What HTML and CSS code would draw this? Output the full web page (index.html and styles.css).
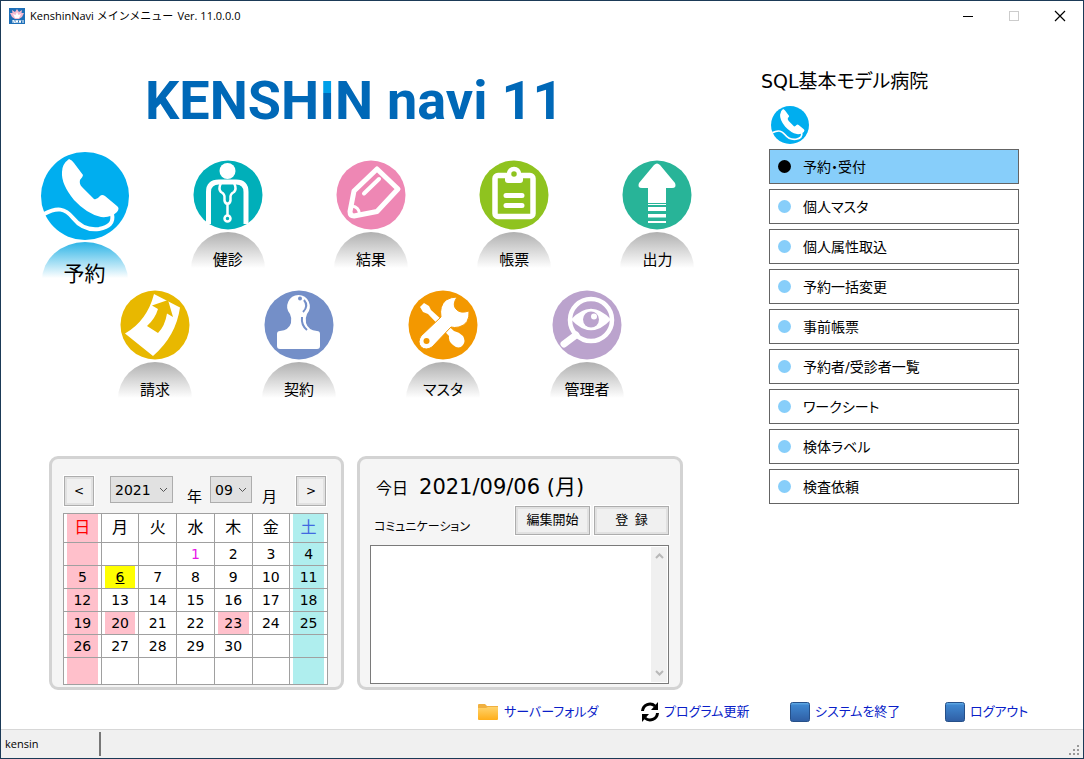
FILE: index.html
```html
<!DOCTYPE html>
<html lang="ja">
<head>
<meta charset="utf-8">
<title>KenshinNavi メインメニュー</title>
<link rel="stylesheet" href="styles.css">
</head>
<body>
<svg class="defs" width="0" height="0" aria-hidden="true">
  <symbol id="phone" viewBox="0 0 88 88">
    <circle cx="44" cy="44" r="44" fill="#00aeef"/>
    <path fill="#fff" d="M28 7Q31 8 33 11L42 23Q42 25 39 28Q38 32 41 35L53 47Q56 48 59 44Q61 42 64 44L76 54Q79 56 76 60Q70 66 60 65Q46 62 33 48Q20 32 21 20Q21 12 28 7Z"/>
    <path fill="none" stroke="#fff" stroke-width="4" d="M3 62C16 55 24 56 32 66C40 76 50 78 58 77C68 75 73 71 71 62"/>
  </symbol>
</svg>
<div class="window">
  <header class="titlebar">
    <svg class="app-icon" viewBox="0 0 16 16" aria-hidden="true">
      <rect width="16" height="16" fill="#1d6fb8"/>
      <path fill="#f3b9cf" d="M8 1l2 3 3-2-.5 3L15 5l-2 4-3 2H6L3 9 1 5l2.500 0L3 2l3 2z"/>
      <path fill="#fff" d="M8 4l1.500 3L12 6l-2 4H6L4 6l2.500 1z"/>
      <path stroke="#fff" fill="none" d="M4 15v-3l2 3v-3M7 15l1-3 1 3M10 12l1 3 1-3M14 12v3"/>
    </svg>
    <h1 class="title">KenshinNavi メインメニュー</h1>
    <span class="version">Ver. 11.0.0.0</span>
    <div class="controls">
      <button class="control" aria-label="最小化"><svg width="12" height="12" viewBox="0 0 12 12"><path d="M1 6.500h10" stroke="#000"/></svg></button>
      <button class="control" aria-label="最大化" disabled><svg width="12" height="12" viewBox="0 0 12 12"><rect x="1.500" y="1.500" width="9" height="9" fill="none" stroke="#ccc"/></svg></button>
      <button class="control" aria-label="閉じる"><svg width="12" height="12" viewBox="0 0 12 12"><path d="M1 1l10 10M11 1L1 11" stroke="#000" stroke-width="1.200"/></svg></button>
    </div>
  </header>

  <main class="main">
    <section class="left">
      <div class="logo"><span>KENSH<span class="logo-i">I</span>N</span> <span>navi</span> <span>11</span></div>

      <nav class="launch launch-top">
        <button class="app app-big">
          <svg class="app-art" aria-hidden="true"><use href="#phone"/></svg>
          <span class="app-label">予約</span>
        </button>
        <button class="app">
          <svg class="app-art" viewBox="0 0 70 70" aria-hidden="true">
            <circle cx="35" cy="35" r="34.500" fill="#00afb9"/>
            <circle cx="34.500" cy="11" r="8" fill="#fff"/>
            <g fill="none" stroke="#fff">
              <path stroke-width="5" d="M15.500 64V32Q15.500 22 26 22H43Q53 22 53 32V64"/>
              <path stroke-width="2.500" d="M28 23Q25 29 28 32Q32 34 31.500 38Q31 43 34.500 44Q38 43 37.500 38Q37 34 41 32Q44 29 41 23M34.500 44V55"/>
              <circle cx="34.500" cy="58.500" r="3" stroke-width="2.500"/>
            </g>
          </svg>
          <span class="app-label">健診</span>
        </button>
        <button class="app">
          <svg class="app-art" viewBox="0 0 70 70" aria-hidden="true">
            <circle cx="35" cy="35" r="34.500" fill="#ee87b4"/>
            <g fill="none" stroke="#fff" stroke-linejoin="round" stroke-linecap="round">
              <path stroke-width="5" d="M41 9L62 29L41 51.500L18 56Q14 56 14 51.500L18 31Z"/>
              <path stroke-width="4" d="M43 19L28 33.500"/>
              <path stroke-width="3" d="M16 46Q23 47 23.500 54"/>
            </g>
          </svg>
          <span class="app-label">結果</span>
        </button>
        <button class="app">
          <svg class="app-art" viewBox="0 0 70 70" aria-hidden="true">
            <circle cx="35" cy="35" r="34.500" fill="#8fc31f"/>
            <rect x="16" y="15.500" width="38" height="41" rx="3" fill="none" stroke="#fff" stroke-width="5.500"/>
            <path fill="#fff" d="M26 14H44V20Q44 23 41 23H29Q26 23 26 20Z"/>
            <circle cx="35" cy="14" r="5" fill="#8fc31f" stroke="#fff" stroke-width="4.500"/>
            <path stroke="#fff" stroke-width="5" stroke-linecap="round" d="M27 35.500H43M27 45.500H43"/>
          </svg>
          <span class="app-label">帳票</span>
        </button>
        <button class="app">
          <svg class="app-art" viewBox="0 0 70 70" aria-hidden="true">
            <circle cx="35" cy="35" r="34.500" fill="#28b498"/>
            <path fill="#fff" d="M32 5Q35 2 38 5L53 23Q55 28 50 28H44V43H26V28H20Q15 28 17 23Z"/>
            <path fill="#fff" d="M26 44H44V45H26ZM26 47H44V51H26ZM26 54H44V57.500H26ZM26 61H44V63H26Z"/>
          </svg>
          <span class="app-label">出力</span>
        </button>
      </nav>

      <nav class="launch launch-bottom">
        <button class="app">
          <svg class="app-art" viewBox="0 0 70 70" aria-hidden="true">
            <circle cx="35" cy="35" r="34.500" fill="#e8b800"/>
            <path fill="#fff" d="M34 4L60 17.500Q56 46 33 66L5 43.500Q27 31 34 4Z"/>
            <path fill="#e8b800" d="M48 10L53 27L47 23.500Q45 36 38 43L27 36Q35 29 38 19L32 15.500Z"/>
          </svg>
          <span class="app-label">請求</span>
        </button>
        <button class="app">
          <svg class="app-art" viewBox="0 0 70 70" aria-hidden="true">
            <circle cx="35" cy="35" r="34.500" fill="#748fc8"/>
            <path fill="#fff" d="M34.500 5A11.500 11.500 0 0 1 43 24Q41 28 42 33Q44 40 53 41Q56 41 56 44V56Q56 59 53 59H16Q13 59 13 56V44Q13 41 16 41Q25 40 27 33Q28 28 26 24A11.500 11.500 0 0 1 34.500 5Z"/>
            <circle cx="36" cy="8.500" r="2" fill="#748fc8"/>
            <path fill="none" stroke="#748fc8" stroke-width="2" d="M40 10Q45 16 39 22M38 27Q37 35 43 40"/>
          </svg>
          <span class="app-label">契約</span>
        </button>
        <button class="app">
          <svg class="app-art" viewBox="0 0 70 70" aria-hidden="true">
            <circle cx="35" cy="35" r="34.500" fill="#f39800"/>
            <path fill="#fff" d="M12 17L16 13L21 16L23 20L46 41Q51 42 55 46Q58 51 55 55Q51 60 45 55Q40 51 41 46L20 24L15 22Z"/>
            <path fill="#fff" stroke="#f39800" d="M49 7Q44 15 48 19Q52 24 61 21Q62 34 51 37Q46 38 43 37L24 57Q18 61 13 57Q9 52 13 46L33 27Q31 16 38 10Q43 7 49 7Z"/>
            <circle cx="18.500" cy="51" r="3" fill="#f39800"/>
          </svg>
          <span class="app-label">マスタ</span>
        </button>
        <button class="app">
          <svg class="app-art" viewBox="0 0 70 70" aria-hidden="true">
            <circle cx="35" cy="35" r="34.500" fill="#bba3cd"/>
            <circle cx="39" cy="30" r="21" fill="none" stroke="#fff" stroke-width="4.500"/>
            <path stroke="#fff" stroke-width="7" stroke-linecap="round" d="M24 45L12 54"/>
            <path fill="#fff" d="M19 29.500Q39 8 59 29.500Q39 51 19 29.500Z"/>
            <circle cx="39" cy="29.500" r="8" fill="#bba3cd"/>
            <circle cx="42" cy="26.500" r="3" fill="#fff"/>
          </svg>
          <span class="app-label">管理者</span>
        </button>
      </nav>

      <div class="panels">
        <section class="panel calendar">
          <div class="month-bar">
            <button class="push step" aria-label="前の月">&lt;</button>
            <select class="pick pick-year" id="year" aria-label="年"><option>2021</option></select>
            <label class="unit unit-year" for="year">年</label>
            <select class="pick pick-month" id="month" aria-label="月"><option>09</option></select>
            <label class="unit unit-month" for="month">月</label>
            <button class="push step step-next" aria-label="次の月">&gt;</button>
          </div>
          <table class="days">
            <thead>
              <tr><th class="sun">日</th><th>月</th><th>火</th><th>水</th><th>木</th><th>金</th><th class="sat">土</th></tr>
            </thead>
            <tbody>
              <tr><td class="sun"></td><td></td><td></td><td class="first">1</td><td>2</td><td>3</td><td class="sat">4</td></tr>
              <tr><td class="sun">5</td><td class="today">6</td><td>7</td><td>8</td><td>9</td><td>10</td><td class="sat">11</td></tr>
              <tr><td class="sun">12</td><td>13</td><td>14</td><td>15</td><td>16</td><td>17</td><td class="sat">18</td></tr>
              <tr><td class="sun">19</td><td class="holiday">20</td><td>21</td><td>22</td><td class="holiday">23</td><td>24</td><td class="sat">25</td></tr>
              <tr><td class="sun">26</td><td>27</td><td>28</td><td>29</td><td>30</td><td></td><td class="sat"></td></tr>
              <tr class="last"><td class="sun"></td><td></td><td></td><td></td><td></td><td></td><td class="sat"></td></tr>
            </tbody>
          </table>
        </section>

        <section class="panel message">
          <p class="date"><span class="date-key">今日</span><span>2021/09/06 (月)</span></p>
          <div class="message-bar">
            <label class="message-label" for="memo">コミュニケーション</label>
            <button class="push">編集開始</button>
            <button class="push">登&ensp;録</button>
          </div>
          <div class="memo">
            <textarea class="memo-text" id="memo"></textarea>
            <div class="scroll" aria-hidden="true">
              <svg width="9" height="6" viewBox="0 0 9 6"><path d="M1 5l3.500-3.500L8 5" fill="none" stroke="#b8b8b8" stroke-width="2"/></svg>
              <svg width="9" height="6" viewBox="0 0 9 6"><path d="M1 1l3.500 3.500L8 1" fill="none" stroke="#b8b8b8" stroke-width="2"/></svg>
            </div>
          </div>
        </section>
      </div>
    </section>

    <aside class="side">
      <h2 class="hospital">SQL基本モデル病院</h2>
      <svg class="side-art" aria-hidden="true"><use href="#phone"/></svg>
      <nav class="menu">
        <button class="item item-on">予約・受付</button>
        <button class="item">個人マスタ</button>
        <button class="item">個人属性取込</button>
        <button class="item">予約一括変更</button>
        <button class="item">事前帳票</button>
        <button class="item">予約者/受診者一覧</button>
        <button class="item">ワークシート</button>
        <button class="item">検体ラベル</button>
        <button class="item">検査依頼</button>
      </nav>
    </aside>
  </main>

  <nav class="links">
    <a class="link" href="#folder">
      <svg width="21" height="22" viewBox="0 0 21 22" aria-hidden="true">
        <defs><linearGradient id="fold" x2="0" y2="1"><stop offset="0" stop-color="#ffd36b"/><stop offset="1" stop-color="#ffae1a"/></linearGradient></defs>
        <path fill="#f0b040" d="M0 4Q0 3 1 3H7L9 5H20V9H0Z"/><path fill="url(#fold)" d="M0 7H8L10 6H20V18Q20 19 19 19H1Q0 19 0 18Z"/>
      </svg>サーバーフォルダ</a>
    <a class="link" href="#update">
      <svg width="18" height="22" viewBox="0 0 18 22" aria-hidden="true">
        <path fill="none" stroke="#000" stroke-width="3" d="M1.500 10A7.500 7.500 0 0 1 14 5M16.500 12A7.500 7.500 0 0 1 4 17"/>
        <path d="M17 1V9H10ZM1 21V13H8Z"/>
      </svg>プログラム更新</a>
    <a class="link" href="#quit">
      <svg width="20" height="22" viewBox="0 0 20 22" aria-hidden="true">
        <defs><linearGradient id="blue" x2="0" y2="1"><stop offset="0" stop-color="#69b4ea"/><stop offset=".15" stop-color="#3f86cf"/><stop offset="1" stop-color="#2f5ea4"/></linearGradient></defs>
        <rect x=".5" y="1.500" width="19" height="19" rx="2" fill="url(#blue)" stroke="#265089"/>
      </svg>システムを終了</a>
    <a class="link" href="#logout">
      <svg width="20" height="22" viewBox="0 0 20 22" aria-hidden="true"><rect x=".5" y="1.500" width="19" height="19" rx="2" fill="url(#blue)" stroke="#265089"/></svg>ログアウト</a>
  </nav>

  <footer class="status">
    <span class="user">kensin</span>
    <svg class="grip" width="12" height="12" viewBox="0 0 12 12" aria-hidden="true"><path fill="#999" d="M8 1h2v2H8zM8 5h2v2H8zM8 9h2v2H8zM4 5h2v2H4zM4 9h2v2H4zM0 9h2v2H0z"/></svg>
  </footer>
</div>
</body>
</html>
```

FILE: styles.css
```css
* { box-sizing: border-box; }

body {
  margin: 0;
  background: #fff;
  color: #000;
  font: 14px/20px "DejaVu Sans", "Noto Sans CJK JP", sans-serif;
  font-feature-settings: "palt";
}

button, select, textarea {
  margin: 0;
  padding: 0;
  color: inherit;
  font: inherit;
  font-feature-settings: inherit;
}

h1, h2, p { margin: 0; font-weight: 400; }

.defs { position: absolute; }

.window {
  display: flex;
  flex-direction: column;
  min-height: 100vh;
  border: 1px solid #1b3a57;
}

.titlebar {
  display: flex;
  align-items: center;
  height: 30px;
  padding-left: 8px;
  font: 11px/16px "Open Sans", "Noto Sans CJK JP", sans-serif;
}
.app-icon { width: 16px; height: 16px; margin-right: 5px; }
.title { font-size: 11px; }
.version { margin-left: 4px; }
.controls { display: flex; margin-left: auto; }
.control {
  display: grid;
  place-items: center;
  width: 46px;
  height: 30px;
  border: 0;
  background: none;
}

.main {
  display: grid;
  grid-template-columns: minmax(0, 1fr) 322px;
  flex: 1;
}

.left { display: flex; flex-direction: column; }

.logo {
  display: flex;
  gap: 14px;
  padding: 37px 0 0 144px;
  color: #0068b7;
  font: bold 54px/66px "Roboto", sans-serif;
  white-space: nowrap;
}
.logo-i {
  background: linear-gradient(#00a0e9 24px, #0068b7 24px);
  background-clip: text;
  color: transparent;
}

.launch { display: grid; }
.launch-top {
  grid-template-columns: repeat(5, 1fr);
  padding: 18px 32px 0 12px;
}
.launch-bottom {
  grid-template-columns: repeat(4, 1fr);
  padding: 2px 102px 0 82px;
}
.app {
  display: flex;
  flex-direction: column;
  align-items: center;
  gap: 2px;
  padding-top: 8px;
  border: 0;
  background: none;
  font-size: 15px;
}
.app-art { width: 70px; height: 70px; }
.app-label {
  width: 74px;
  height: 38px;
  padding-top: 18px;
  border-radius: 37px 37px 0 0;
  background: linear-gradient(#b0b0b0, #fff 95%);
  line-height: 20px;
}
.app-big { padding-top: 0; font-size: 21px; }
.app-big .app-art { width: 88px; height: 88px; }
.app-big .app-label {
  width: 86px;
  padding-top: 22px;
  border-radius: 50% 50% 0 0 / 100% 100% 0 0;
  background: linear-gradient(#2db4e6, #fff 95%);
}

.panels {
  display: grid;
  grid-template-columns: 295fr 326fr;
  gap: 13px;
  margin-top: 56px;
  padding: 0 78px 0 48px;
}
.panel {
  height: 234px;
  border: 3px solid #d3d3d3;
  border-radius: 9px;
  background: #f5f5f5;
}
.calendar { padding: 17px 13px 0 11px; }
.message { padding: 15px 11px 0 10px; }

.push {
  border: 1px solid #adadad;
  outline: 1px solid #fff;
  background: #f0f0f0;
  box-shadow: inset 0 0 0 2px #e1e1e1;
  font-size: 13px;
}
.step { width: 30px; height: 30px; font-size: 12px; }

.month-bar {
  display: flex;
  align-items: flex-start;
  height: 30px;
  padding: 0 2px 0 1px;
}
.pick {
  height: 27px;
  padding: 0 4px;
  border: 1px solid #adadad;
  border-radius: 0;
  appearance: none;
  background: #e1e1e1 url("data:image/svg+xml,%3Csvg xmlns='http://www.w3.org/2000/svg' width='9' height='6'%3E%3Cpath d='M1 1l3.500 3.500L8 1' fill='none' stroke='%23555'/%3E%3C/svg%3E") no-repeat right 4px center;
}
.pick-year { width: 63px; margin-left: 16px; }
.pick-month { width: 42px; margin-left: 8px; }
.unit { align-self: flex-end; font-size: 15px; line-height: 18px; }
.unit-year { margin-left: 14px; }
.unit-month { margin-left: 10px; }
.step-next { margin-left: auto; }

.days {
  width: 100%;
  margin-top: 7px;
  border-collapse: collapse;
  table-layout: fixed;
}
.days th, .days td {
  height: 23px;
  padding: 0 3px;
  border: 1px solid #a0a0a0;
  background: #fff;
  font-weight: 400;
  line-height: 20px;
  text-align: center;
}
.days th { height: 29px; font-size: 16px; }
.days .last td { height: 27px; }
.days .sun { background: linear-gradient(#ffc0cb, #ffc0cb) content-box, #fff; }
.days .sat { background: linear-gradient(#afeeee, #afeeee) content-box, #fff; }
.days .holiday { background: linear-gradient(#ffc0cb, #ffc0cb) content-box, #fff; }
.days .today { background: linear-gradient(#ff0, #ff0) content-box, #fff; text-decoration: underline; }
.days th.sun { color: #f00; }
.days th.sat { color: #4169e1; }
.days .first { color: #e815e8; }

.date {
  display: flex;
  align-items: baseline;
  gap: 11px;
  padding-left: 6px;
  font-size: 21px;
  line-height: 26px;
}
.date-key { font-size: 16px; }
.message-bar {
  display: flex;
  align-items: center;
  gap: 4px;
  padding-top: 2px;
}
.message-bar .push { width: 75px; height: 29px; }
.message-label {
  flex: 1;
  padding: 14px 0 0 4px;
  font-size: 12px;
  line-height: 18px;
  white-space: nowrap;
}
.memo {
  display: flex;
  height: 139px;
  margin-top: 9px;
  padding: 1px;
  border: 1px solid #7a7a7a;
  background: #fff;
}
.memo-text {
  flex: 1;
  min-width: 0;
  border: 0;
  outline: 0;
  resize: none;
}
.scroll {
  display: flex;
  flex-direction: column;
  align-items: center;
  justify-content: space-between;
  width: 16px;
  padding: 6px 0;
  background: #f0f0f0;
}

.side { padding: 36px 64px 0 8px; }
.hospital { font-size: 19px; line-height: 28px; margin-left: -8px; white-space: nowrap; }
.side-art { display: block; width: 38px; height: 38px; margin: 11px 0 5px 2px; }
.menu { display: grid; gap: 5px; }
.item {
  display: flex;
  align-items: center;
  gap: 12px;
  height: 35px;
  padding-left: 8px;
  border: 1px solid #646464;
  background: #fff;
}
.item::before {
  content: "";
  width: 13px;
  height: 13px;
  border-radius: 50%;
  background: #87cefa;
}
.item-on { background: #87cefa; }
.item-on::before { background: #000; }

.links {
  display: grid;
  grid-template-columns: 163px 149px 155px 138px;
  justify-content: end;
  padding-bottom: 5px;
}
.link {
  display: flex;
  align-items: center;
  gap: 5px;
  height: 24px;
  color: #0a1ec8;
  font-size: 13px;
  text-decoration: none;
  white-space: nowrap;
}

.status {
  display: flex;
  align-items: center;
  height: 29px;
  border-top: 1px solid #d7d7d7;
  background: #f0f0f0;
  font: 11px/16px "Open Sans", sans-serif;
}
.user {
  width: 100px;
  padding: 4px;
  border-right: 2px solid #777;
}
.grip { margin: auto 2px 2px auto; }
```
